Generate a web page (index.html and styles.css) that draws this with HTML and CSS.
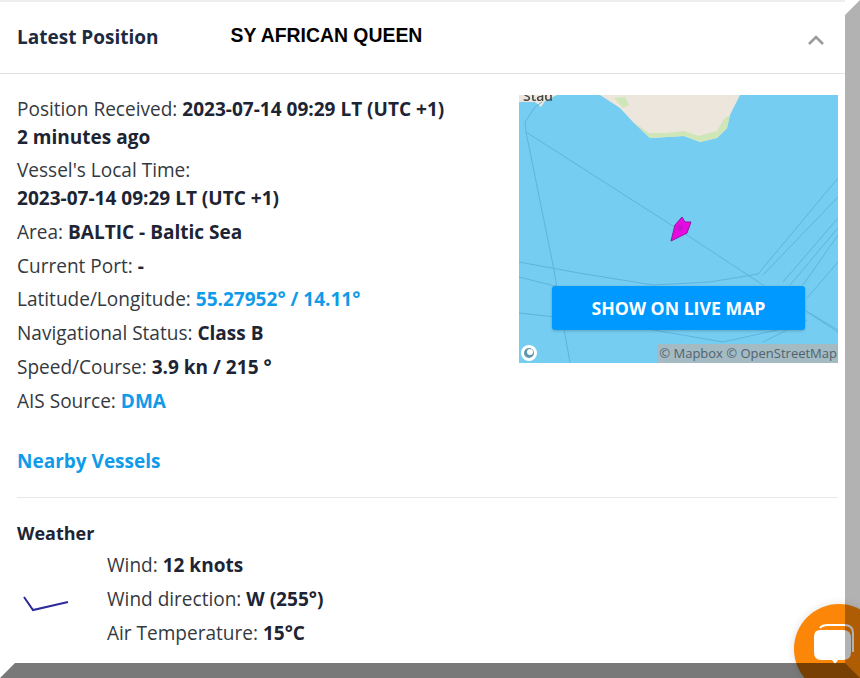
FILE: index.html
```html
<!DOCTYPE html>
<html lang="en">
<head>
  <meta charset="UTF-8" />
  <title>SY African Queen - Latest Position</title>
  <link rel="stylesheet" href="styles.css">
</head>
<body>
  <div class="card">
    <div class="card-head">
      <h2 class="card-title">Latest Position</h2>
      <span class="vessel-name">SY AFRICAN QUEEN</span>
      <svg class="chevron" width="18" height="12" viewBox="0 0 18 12">
        <path d="M2 10 L9 3 L16 10" fill="none" stroke="#9b9b9b" stroke-width="2.6"/>
      </svg>
    </div>

    <div class="card-body">
      <div class="summary">
        <div class="facts">
          <p class="fact">Position Received: <b>2023-07-14 09:29 LT (UTC +1)</b><br><b>2 minutes ago</b></p>
          <p class="fact">Vessel's Local Time:<br><b>2023-07-14 09:29 LT (UTC +1)</b></p>
          <p class="fact">Area: <b>BALTIC - Baltic Sea</b></p>
          <p class="fact">Current Port: <b>-</b></p>
          <p class="fact">Latitude/Longitude: <a class="link" href="#">55.27952° / 14.11°</a></p>
          <p class="fact">Navigational Status: <b>Class B</b></p>
          <p class="fact">Speed/Course: <b>3.9 kn / 215 °</b></p>
          <p class="fact">AIS Source: <a class="link" href="#">DMA</a></p>
        </div>

        <div class="map">
          <svg class="map-art" width="319" height="268" viewBox="0 0 319 268">
            <rect width="319" height="268" fill="#75cdf2"/>
            <path d="M81 0 L101 13 L114 27 L131 43 L148 42 L165 41 L181 47 L198 43 L208 33 L211 20 L221 0 Z" fill="#ece6dc"/>
            <path d="M114 27 L131 43 L148 42 L165 41 L181 47 L198 43 L208 33 L211 20 L205 24 L198 36 L180 41 L165 36 L148 38 L130 38 Z" fill="#cfe6b8"/>
            <path d="M95 3 L104 13 L110 10 L106 2 Z" fill="#cfe6b8"/>
            <path d="M0 0 H38 L26 6 L22 12 L16 7 H0 Z" fill="#ece6dc"/>
            <text class="map-place" x="4" y="6">Stad</text>
            <g fill="none" stroke="#5fb4dc" stroke-width="1">
              <path d="M23 7 L16 12 L6 27 L7 37 L34 170 L51 268"/>
              <path d="M7 37 L168 140 L244 190 L319 235"/>
              <path d="M0 167 L60 178 L134 190 L191 187 L239 179 L319 83"/>
              <path d="M0 182 L60 197 L110 205"/>
              <path d="M0 218 L100 229 L204 247"/>
              <path d="M244 180 L319 102"/>
              <path d="M264 187 L319 123"/>
              <path d="M271 190 L319 133"/>
              <path d="M284 190 L319 140"/>
              <path d="M288 203 L319 167"/>
              <path d="M288 217 L319 237"/>
              <path d="M204 247 L258 235"/>
              <path d="M244 247 L288 225"/>
            </g>
            <path d="M152 146 L156 130 L163 122 L166 127 L172 127 L168 138 Z" fill="#e80ae0" stroke="#8a1a9a" stroke-width="1"/>
            <circle cx="161" cy="133" r="3" fill="#c414d0"/>
          </svg>
          <svg class="map-logo" width="18" height="18" viewBox="0 0 18 18">
            <circle cx="9" cy="9" r="6.5" fill="#5e97ad" stroke="#fff" stroke-width="3"/>
            <circle cx="10" cy="8" r="3" fill="#fff"/>
          </svg>
          <a class="map-btn" href="#">SHOW ON LIVE MAP</a>
          <span class="map-credit">© Mapbox © OpenStreetMap</span>
        </div>
      </div>

      <a class="link nearby" href="#">Nearby Vessels</a>
      <hr class="rule">

      <h3 class="weather-title">Weather</h3>
      <div class="weather">
        <svg class="wind-icon" width="90" height="100" viewBox="0 0 90 100">
          <path d="M7 45 L16 58 L51 50" fill="none" stroke="#2d2a9c" stroke-width="2"/>
        </svg>
        <div class="weather-facts">
          <p class="fact">Wind: <b>12 knots</b></p>
          <p class="fact">Wind direction: <b>W (255°)</b></p>
          <p class="fact">Air Temperature: <b>15°C</b></p>
        </div>
      </div>
    </div>
  </div>

  <div class="chat">
    <svg width="48" height="50" viewBox="0 0 48 50">
      <path d="M10 8 Q12 5 18 5 H34 Q43 5 43 13 V32" fill="none" stroke="#fff" stroke-width="2"/>
      <path d="M10 10 H33 Q41 10 41 18 V32 Q41 40 33 40 H28 L25 44 L22 40 H11 Q4 40 4 32 V17 Q4 10 10 10 Z" fill="#fff"/>
    </svg>
  </div>

  <div class="bevel"></div>
</body>
</html>
```

FILE: styles.css
```css
* {
  box-sizing: border-box;
}

body {
  margin: 0;
  height: 678px;
  overflow: hidden;
  font-family: "Open Sans", "Noto Sans", sans-serif;
  color: #1d2433;
  background: #fff;
}

.card {
  width: 845px;
  border-top: 2px solid #eee;
}

.card-head {
  display: flex;
  align-items: center;
  height: 72px;
  padding: 0 17px;
  border-bottom: 1px solid #e2e2e2;
}

.card-title {
  margin: -2px 0 0;
  font-size: 19px;
  font-weight: 700;
  color: #1d2a40;
}

.vessel-name {
  margin: -4px 0 0 72px;
  font-family: "Liberation Sans", Arial, sans-serif;
  font-size: 19.4px;
  font-weight: 700;
  color: #000;
}

.chevron {
  margin: 4px 3px 0 auto;
}

.card-body {
  padding: 21px 7px 0 17px;
}

.summary {
  display: flex;
  justify-content: space-between;
}

.facts {
  padding-top: 1px;
}

.fact {
  margin: 0 0 6.2px;
  font-size: 19.05px;
  line-height: 27.6px;
  color: #343941;
}

.fact b {
  font-weight: 700;
  color: #1d2433;
}

.link {
  font-weight: 700;
  color: #0f9bea;
  text-decoration: none;
}

.map {
  position: relative;
  width: 319px;
  height: 268px;
  overflow: hidden;
}

.map-art {
  display: block;
  filter: blur(0.4px);
}

.map-place {
  font-size: 14px;
  font-weight: 600;
  fill: #4a4a4a;
}

.map-btn {
  position: absolute;
  left: 33px;
  top: 191px;
  width: 253px;
  height: 44px;
  line-height: 44px;
  text-align: center;
  font-size: 17.7px;
  font-weight: 700;
  color: #fff;
  text-decoration: none;
  background: #0099ff;
  border-radius: 3px;
  box-shadow: 0 1px 3px rgba(0, 0, 0, 0.2);
}

.map-logo {
  position: absolute;
  left: 1px;
  top: 249px;
}

.map-credit {
  position: absolute;
  right: 0;
  bottom: 0;
  height: 19px;
  padding: 0 1px 0 2px;
  line-height: 19px;
  font-size: 13px;
  color: #51626e;
  background: rgba(180, 180, 180, 0.75);
  white-space: nowrap;
}

.nearby {
  display: block;
  margin-top: 27px;
  font-size: 19px;
  line-height: 26px;
}

.rule {
  margin: 23px 0 0;
  border: 0;
  border-top: 1px solid #e8e8e8;
}

.weather-title {
  margin: 23px 0 0;
  font-size: 18px;
  line-height: 24px;
  font-weight: 700;
  color: #1d2433;
}

.weather {
  display: flex;
  margin-top: 7px;
}

/* chat bubble, half off the window edge */
.chat {
  position: absolute;
  left: 794px;
  top: 604px;
  width: 90px;
  height: 90px;
  padding: 16px 0 0 16px;
  border-radius: 50%;
  background: #fb8608;
  box-shadow: 0 0 8px rgba(0, 0, 0, 0.12);
}

/* see-through bevel round the whole picture, it darkens the chat button too */
.bevel {
  position: absolute;
  left: 0;
  top: 0;
  width: 860px;
  height: 678px;
  border-style: solid;
  border-width: 15px;
  border-color: transparent rgba(0, 0, 0, 0.3) rgba(0, 0, 0, 0.52) transparent;
  pointer-events: none;
}
```
